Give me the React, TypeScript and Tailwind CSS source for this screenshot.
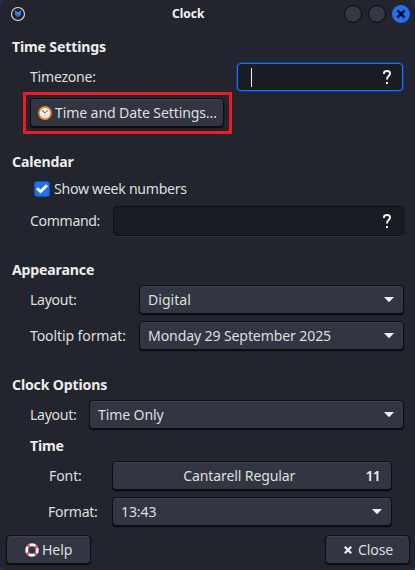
import React from "react";

const raised =
  "flex items-center rounded-[4px] border border-[#0e0f13] bg-[#323643] shadow-[inset_0_1px_0_#3d414e,0_1px_1px_#08090c]";

function Caret() {
  return (
    <svg width="10" height="5" viewBox="0 0 10 5" className="shrink-0">
      <path d="M0 0h10L5.8 4.6Q5 5.3 4.2 4.6Z" fill="#f0f0ee" />
    </svg>
  );
}

function Question() {
  return (
    <svg width="8" height="14" viewBox="0 0 8 14" className="shrink-0" fill="none" stroke="#eeeeec">
      <path d="M1 4V3Q1 1 4 1Q7 1 7 3.4Q7 4.9 5.6 6Q4 7.3 4 9.6" strokeWidth="2" />
      <path d="M3 13h2" strokeWidth="2" />
    </svg>
  );
}

function Select({ label, className }: { label: string; className: string }) {
  return (
    <div className={`${raised} h-[29px] justify-between pl-2 pr-[9px] ${className}`}>
      <span>{label}</span>
      <Caret />
    </div>
  );
}

function Heading({ children, className }: { children: string; className: string }) {
  return <h2 className={`h-5 font-bold leading-5 tracking-[-0.16px] text-[#eeeeec] ${className}`}>{children}</h2>;
}

export default function App() {
  return (
    <div className="h-[570px] w-[415px] overflow-hidden bg-[#19345a]">
      <div className="flex h-[570px] w-[415px] flex-col overflow-hidden rounded-[5px] bg-[#23252e] font-['Noto_Sans','Open_Sans',sans-serif] text-[14.1px] leading-5 tracking-[-0.13px] whitespace-nowrap text-[#dfdfdd]">
        <header className="flex h-7 shrink-0 items-center pl-[10px] pr-[5px]">
          <svg width="16" height="16" viewBox="0 0 16 16">
            <circle cx="8" cy="8" r="6.5" fill="#20232d" stroke="#dedfe2" strokeWidth="1.1" />
            <path d="M5 5 8 6.6 11 5V8.6Q10.4 10.4 8 11Q5.6 10.4 5 8.6Z" fill="#2a70ee" />
            <path d="M4.6 4.6 8 7.4 11.4 4.6" fill="none" stroke="#9db3da" strokeWidth=".7" />
          </svg>
          <h1 className="ml-[146px] text-[12px] font-bold leading-5 tracking-normal text-[#f5f5f4]">Clock</h1>
          <div className="ml-auto flex justify-end gap-[6px]">
            <span className="size-[18px] rounded-full border border-[#0b0c10] bg-[#343744]" />
            <span className="size-[18px] rounded-full border border-[#0b0c10] bg-[#343744]" />
            <svg width="18" height="18" viewBox="0 0 18 18">
              <circle cx="9" cy="9" r="9" fill="#2370f7" />
              <path d="m5.4 5.4 7.2 7.2m0-7.2-7.2 7.2" stroke="#0c1019" strokeWidth="2.6" />
            </svg>
          </div>
        </header>

        <Heading className="mt-[9px] ml-3">Time Settings</Heading>
        <div className="mt-[6px] flex h-7 items-center justify-between pr-3 pl-[30px]">
          <span className="tracking-[-0.25px]">Timezone:</span>
          <div className="flex h-7 w-[166px] items-center justify-between rounded-[4px] border border-[#1c70ff] bg-[#1b1d25] pr-[11px] pl-[13px] shadow-[0_0_0_1px_#123d86]">
            <span className="h-[19px] w-px bg-[#eeeeec]" />
            <Question />
          </div>
        </div>
        <div className="mt-px ml-[23px] h-[42px] w-[209px] shrink-0 border-[3px] border-[#ed1c24] px-1 pt-[3px]">
          <div className={`${raised} h-[29px] w-[194px] gap-[3px] pl-[7px]`}>
            <svg width="14" height="14" viewBox="0 0 14 14" className="shrink-0">
              <circle cx="7" cy="7" r="6.1" fill="#eeeeec" stroke="#ee8518" strokeWidth="1.6" />
              <path d="m4 4.4 3 2.4 2.9-2.4" fill="none" stroke="#5a5a5a" strokeWidth="1" />
              <path d="M7 6.8v4.5" stroke="#efb2b2" strokeWidth=".9" />
            </svg>
            <span>Time and Date Settings...</span>
          </div>
        </div>

        <Heading className="mt-[18px] ml-3">Calendar</Heading>
        <div className="mt-[7px] flex h-5 items-center gap-1 pl-[34px]">
          <span className="mb-px grid size-4 place-items-center rounded-[3px] border border-[#164eb6] bg-[#2370f7]">
            <svg width="12" height="10" viewBox="0 0 12 10">
              <path d="m1 4.2 3.6 3.4L11 1.3" fill="none" stroke="#fff" strokeWidth="2.8" />
            </svg>
          </span>
          <span className="tracking-[-0.27px]">Show week numbers</span>
        </div>
        <div className="mt-[7px] flex h-[30px] items-center justify-between pr-[11px] pl-[30px]">
          <span className="tracking-[-0.35px]">Command:</span>
          <div className="flex h-[30px] w-[291px] items-center justify-end rounded-[4px] border border-[#0f1013] bg-[#1b1d25] pr-3 shadow-[inset_0_2px_5px_#1b1c1f,0_1px_0_#2d3039]">
            <Question />
          </div>
        </div>

        <Heading className="mt-6 ml-3">Appearance</Heading>
        <div className="mt-[5px] flex h-[29px] items-center justify-between pr-[11px] pl-[30px]">
          <span className="tracking-[-0.3px]">Layout:</span>
          <Select label="Digital" className="w-[265px] tracking-normal" />
        </div>
        <div className="mt-[7px] flex h-[29px] items-center justify-between pr-[11px] pl-[30px]">
          <span>Tooltip format:</span>
          <Select label="Monday 29 September 2025" className="w-[265px]" />
        </div>

        <Heading className="mt-[25px] ml-3">Clock Options</Heading>
        <div className="mt-[5px] flex h-[29px] items-center justify-between pr-[11px] pl-[30px]">
          <span className="tracking-[-0.3px]">Layout:</span>
          <Select label="Time Only" className="w-[315px]" />
        </div>
        <Heading className="mt-[7px] ml-[30px]">Time</Heading>
        <div className="mt-[5px] flex h-[29px] items-center justify-between pr-[23px] pl-[49px]">
          <span>Font:</span>
          <div className={`${raised} h-[29px] w-[280px] pr-[11px]`}>
            <span className="grow text-center">Cantarell Regular</span>
            <span className="text-[14.1px] font-semibold tracking-[-0.8px] text-[#eeeeec]">11</span>
          </div>
        </div>
        <div className="mt-[7px] flex h-[29px] items-center justify-between pr-[23px] pl-12">
          <span className="tracking-[-0.3px]">Format:</span>
          <Select label="13:43" className="w-[280px]" />
        </div>

        <footer className="mt-[9px] flex h-[29px] justify-between pr-[5px] pl-[6px]">
          <button className={`${raised} w-[85px] gap-[3px] pl-[18px]`}>
            <svg width="14" height="14" viewBox="0 0 14 14">
              <circle cx="7" cy="7" r="5.3" fill="none" stroke="#f4f4f2" strokeWidth="3" />
              <circle cx="7" cy="7" r="5.3" fill="none" stroke="#ea4b4b" strokeWidth="3" strokeDasharray="2.4 5.925" strokeDashoffset="-2.96" />
            </svg>
            <span>Help</span>
          </button>
          <button className={`${raised} w-[85px] gap-[6px] pl-[18px]`}>
            <svg width="8" height="8" viewBox="0 0 8 8">
              <path d="m.8.8 6.4 6.4m0-6.4L.8 7.2" stroke="#eeeeec" strokeWidth="2.2" />
            </svg>
            <span>Close</span>
          </button>
        </footer>
      </div>
    </div>
  );
}
